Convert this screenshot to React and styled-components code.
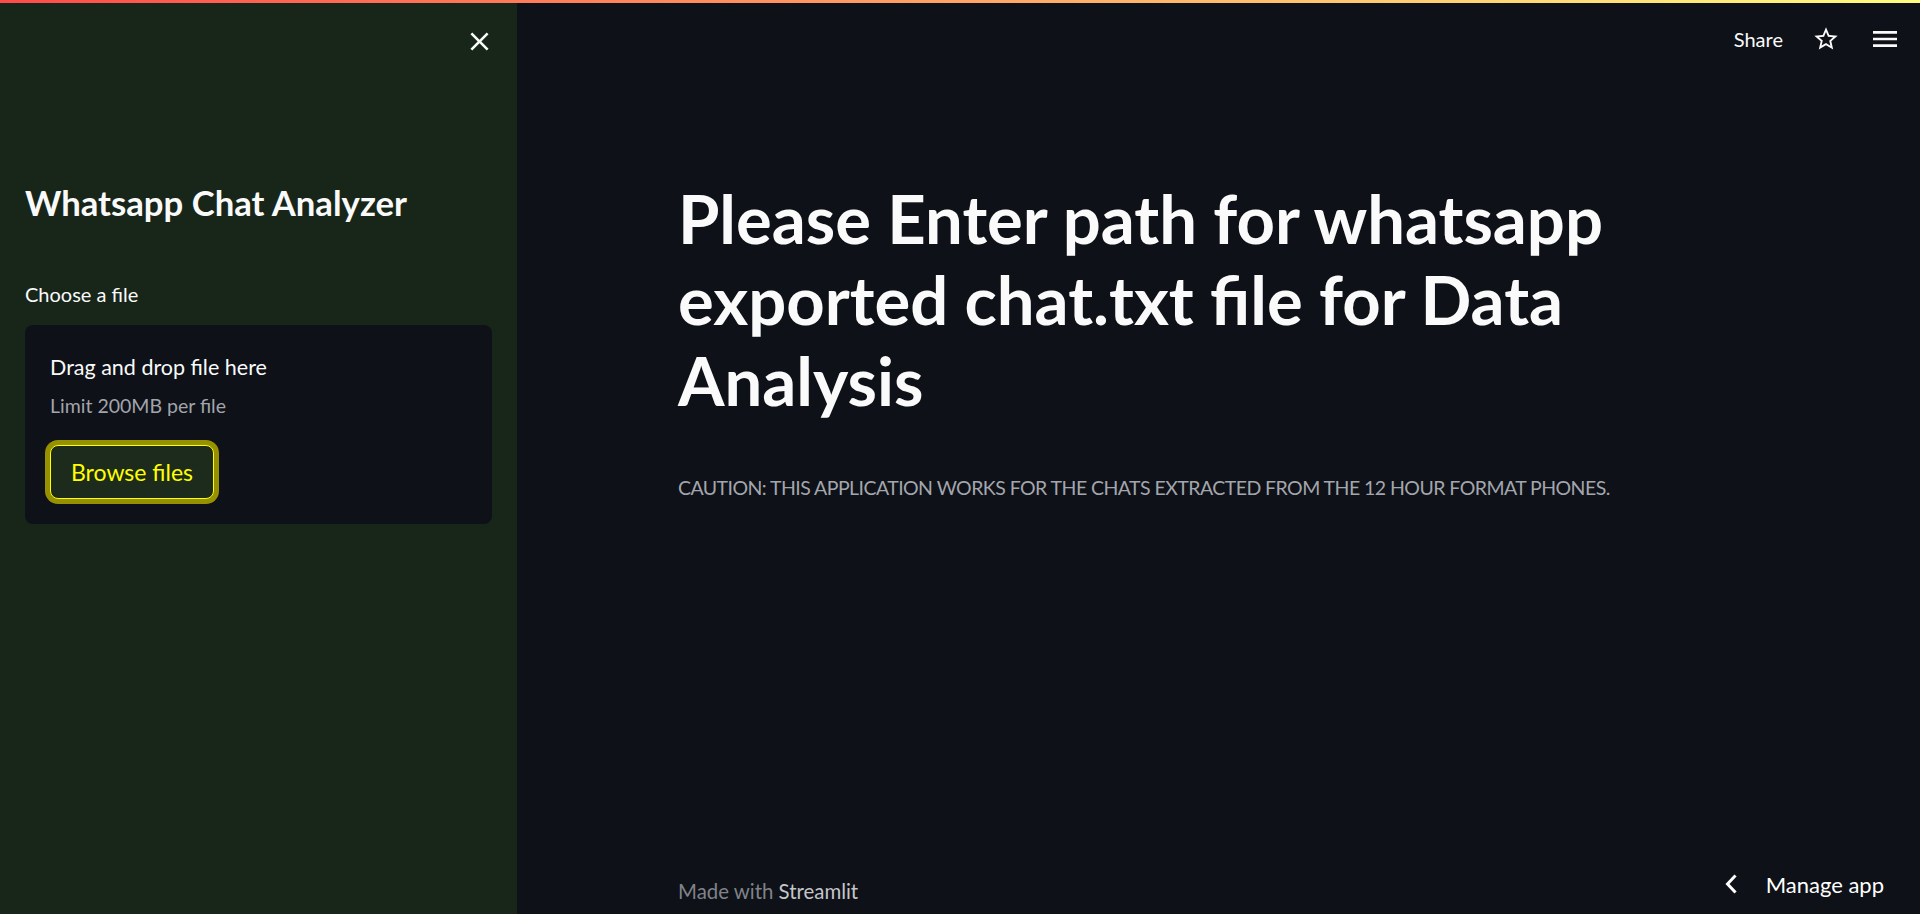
import React from 'react';
import styled, { createGlobalStyle } from 'styled-components';

const GlobalStyle = createGlobalStyle`
  html, body {
    margin: 0;
    padding: 0;
    background: #0e1117;
    font-family: Lato, "Open Sans", sans-serif;
    color: #fafafa;
  }
  * { box-sizing: border-box; }
`;

const Page = styled.div`
  position: relative;
  display: flex;
  height: 100vh;
  overflow: hidden;
`;

const Decoration = styled.div`
  position: absolute;
  top: 0;
  left: 0;
  right: 0;
  height: 3px;
  z-index: 5;
  background: linear-gradient(90deg, #ff4b4b, #fffd80);
`;

const Sidebar = styled.aside`
  width: 517px;
  flex-shrink: 0;
  background: #18261a;
  display: flex;
  flex-direction: column;
`;

const SidebarHead = styled.div`
  height: 82px;
  display: flex;
  justify-content: flex-end;
  align-items: center;
  padding-right: 20px;
`;

const IconButton = styled.button`
  width: ${(p) => p.size}px;
  height: ${(p) => p.size}px;
  padding: 0;
  border: 0;
  background: transparent;
  color: #fafafa;
  display: flex;
  align-items: center;
  justify-content: center;
  cursor: pointer;
  svg { display: block; }
`;

const SidebarBody = styled.div`
  padding: 100px 25px 0;
`;

const SidebarTitle = styled.h1`
  margin: 0;
  font-weight: 700;
  font-size: 34.7px;
  line-height: 42px;
  color: #fafafa;
`;

const FieldLabel = styled.label`
  display: block;
  margin-top: 55px;
  font-size: 20px;
  line-height: 30px;
  color: #fafafa;
`;

const Dropzone = styled.section`
  margin-top: 16px;
  background: #0e1117;
  border-radius: 8px;
  padding: 26px 25px 25px;
  display: flex;
  flex-direction: column;
  align-items: flex-start;
`;

const DropTitle = styled.div`
  font-size: 21.5px;
  line-height: 32px;
  color: #fafafa;
`;

const DropHint = styled.div`
  margin-top: 9px;
  font-size: 19.5px;
  line-height: 27px;
  color: #a2a5ab;
`;

const BrowseButton = styled.button`
  margin-top: 26px;
  height: 54px;
  padding: 0 20px;
  border: 1px solid #ffff00;
  border-radius: 8px;
  background: #1d2b1d;
  color: #ffff00;
  font-family: Lato, "Open Sans", sans-serif;
  font-size: 23px;
  box-shadow: 0 0 0 5px #959100;
  cursor: pointer;
`;

const Main = styled.main`
  position: relative;
  flex: 1;
  min-width: 0;
  display: flex;
  flex-direction: column;
`;

const Header = styled.header`
  height: 77px;
  display: flex;
  justify-content: flex-end;
  align-items: center;
  gap: 29px;
  padding-right: 19px;
`;

const ShareLink = styled.span`
  font-size: 20px;
  color: #fafafa;
  cursor: pointer;
`;

const Content = styled.div`
  width: 1081px;
  margin: 0 auto;
  flex: 1;
  padding-top: 101px;
`;

const Title = styled.h1`
  margin: 0;
  font-weight: 700;
  font-size: 67px;
  line-height: 81px;
  color: #fafafa;
`;

const Caution = styled.p`
  margin: 51px 0 0;
  font-size: 19.5px;
  line-height: 32px;
  letter-spacing: -0.55px;
  color: #a3a6ad;
`;

const Footer = styled.footer`
  width: 1081px;
  margin: 0 auto;
  padding-bottom: 8px;
  font-size: 20.4px;
  line-height: 30px;
  color: #808389;
`;

const FooterBrand = styled.span`
  color: #c4c6cb;
`;

const ManageApp = styled.div`
  position: absolute;
  right: 0;
  bottom: 7px;
  height: 46px;
  display: flex;
  align-items: center;
  gap: 29px;
  padding: 0 36px 0 0;
  font-size: 22px;
  color: #ffffff;
  cursor: pointer;
`;

const CloseIcon = () => (
  <svg width="31" height="31" viewBox="0 0 24 24" fill="currentColor">
    <path d="M19 6.41L17.59 5 12 10.59 6.41 5 5 6.41 10.59 12 5 17.59 6.41 19 12 13.41 17.59 19 19 17.59 13.41 12z" />
  </svg>
);

const StarIcon = () => (
  <svg width="28" height="28" viewBox="0 0 24 24" fill="currentColor">
    <path d="M22 9.24l-7.19-.62L12 2 9.19 8.63 2 9.24l5.46 4.73L5.82 21 12 17.27 18.18 21l-1.63-7.03L22 9.24zM12 15.4l-3.76 2.27 1-4.28-3.32-2.880 4.38-.38L12 6.1l1.71 4.04 4.38.38-3.32 2.88 1 4.28L12 15.4z" />
  </svg>
);

const MenuIcon = () => (
  <svg width="32" height="32" viewBox="0 0 24 24" fill="currentColor">
    <path d="M3 18h18v-2H3v2zm0-5h18v-2H3v2zm0-7v2h18V6H3z" />
  </svg>
);

const ChevronLeft = () => (
  <svg width="12" height="20" viewBox="0 0 12 20" fill="none" stroke="currentColor" strokeWidth="3" strokeLinecap="square">
    <polyline points="9.5,2.5 2.5,10 9.5,17.5" />
  </svg>
);

export default function App() {
  return (
    <>
      <GlobalStyle />
      <Page>
        <Decoration />
        <Sidebar>
          <SidebarHead>
            <IconButton size={36} aria-label="Close sidebar">
              <CloseIcon />
            </IconButton>
          </SidebarHead>
          <SidebarBody>
            <SidebarTitle>Whatsapp Chat Analyzer</SidebarTitle>
            <FieldLabel>Choose a file</FieldLabel>
            <Dropzone>
              <DropTitle>Drag and drop file here</DropTitle>
              <DropHint>Limit 200MB per file</DropHint>
              <BrowseButton type="button">Browse files</BrowseButton>
            </Dropzone>
          </SidebarBody>
        </Sidebar>
        <Main>
          <Header>
            <ShareLink>Share</ShareLink>
            <IconButton size={28} aria-label="Star">
              <StarIcon />
            </IconButton>
            <IconButton size={32} aria-label="Menu">
              <MenuIcon />
            </IconButton>
          </Header>
          <Content>
            <Title>Please Enter path for whatsapp exported chat.txt file for Data Analysis</Title>
            <Caution>CAUTION: THIS APPLICATION WORKS FOR THE CHATS EXTRACTED FROM THE 12 HOUR FORMAT PHONES.</Caution>
          </Content>
          <Footer>
            Made with <FooterBrand>Streamlit</FooterBrand>
          </Footer>
          <ManageApp>
            <ChevronLeft />
            Manage app
          </ManageApp>
        </Main>
      </Page>
    </>
  );
}
